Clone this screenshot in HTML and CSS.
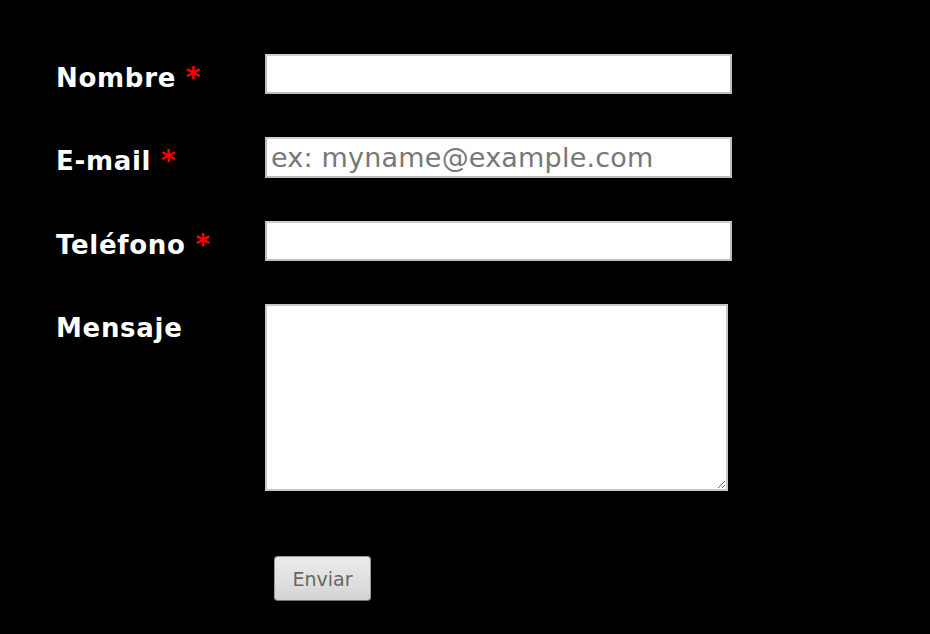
FILE: index.html
```html
<!DOCTYPE html>
<html lang="es">
<head>
<meta charset="utf-8">
<title>Contacto</title>
<link rel="stylesheet" href="styles.css">
</head>
<body>
<form class="form">
  <div class="row">
    <label class="label">Nombre <span class="req">*</span></label>
    <input class="field" type="text">
  </div>
  <div class="row">
    <label class="label">E-mail <span class="req">*</span></label>
    <input class="field tall" type="text" placeholder="ex: myname@example.com">
  </div>
  <div class="row">
    <label class="label">Teléfono <span class="req">*</span></label>
    <input class="field" type="text">
  </div>
  <div class="row">
    <label class="label">Mensaje</label>
    <textarea class="area"></textarea>
  </div>
  <div class="row actions">
    <button class="btn" type="button">Enviar</button>
  </div>
</form>
</body>
</html>
```
FILE: styles.css
```css
html, body {
  margin: 0;
  padding: 0;
  background: #000;
  font-family: "DejaVu Sans", Verdana, sans-serif;
}
.form {
  padding: 54px 0 0 56px;
  display: flex;
  flex-direction: column;
  gap: 43px;
}
.row {
  display: flex;
  align-items: flex-start;
}
.label {
  width: 209px;
  color: #fff;
  font-weight: bold;
  font-size: 26px;
  letter-spacing: 0.7px;
  line-height: 30px;
  padding-top: 9px;
}
.req {
  color: #f00;
  font-size: 28px;
}
.field {
  box-sizing: border-box;
  width: 467px;
  height: 40px;
  margin: 0;
  border: 2px solid #bdbdbd;
  border-top-color: #d0d0d0;
  background: #fff;
  font-family: "DejaVu Sans", sans-serif;
  font-size: 27px;
  letter-spacing: 0.2px;
  padding: 0 5px 0 4px;
  outline: none;
}
.tall {
  height: 41px;
}
.field::placeholder {
  color: #777;
}
.area {
  box-sizing: border-box;
  width: 463px;
  height: 187px;
  margin: 0;
  border: 2px solid #c8c8c8;
  background: #fff;
  font-family: "DejaVu Sans", sans-serif;
  font-size: 16px;
}
.actions {
  padding-left: 218px;
  margin-top: 22px;
}
.btn {
  width: 97px;
  height: 45px;
  border: 1px solid #999;
  border-bottom-color: #777;
  border-radius: 4px;
  background: linear-gradient(#ebebeb, #dcdcdc 70%, #d2d2d2);
  color: #666;
  font-family: "DejaVu Sans", sans-serif;
  font-size: 19px;
  padding: 0;
}
```
